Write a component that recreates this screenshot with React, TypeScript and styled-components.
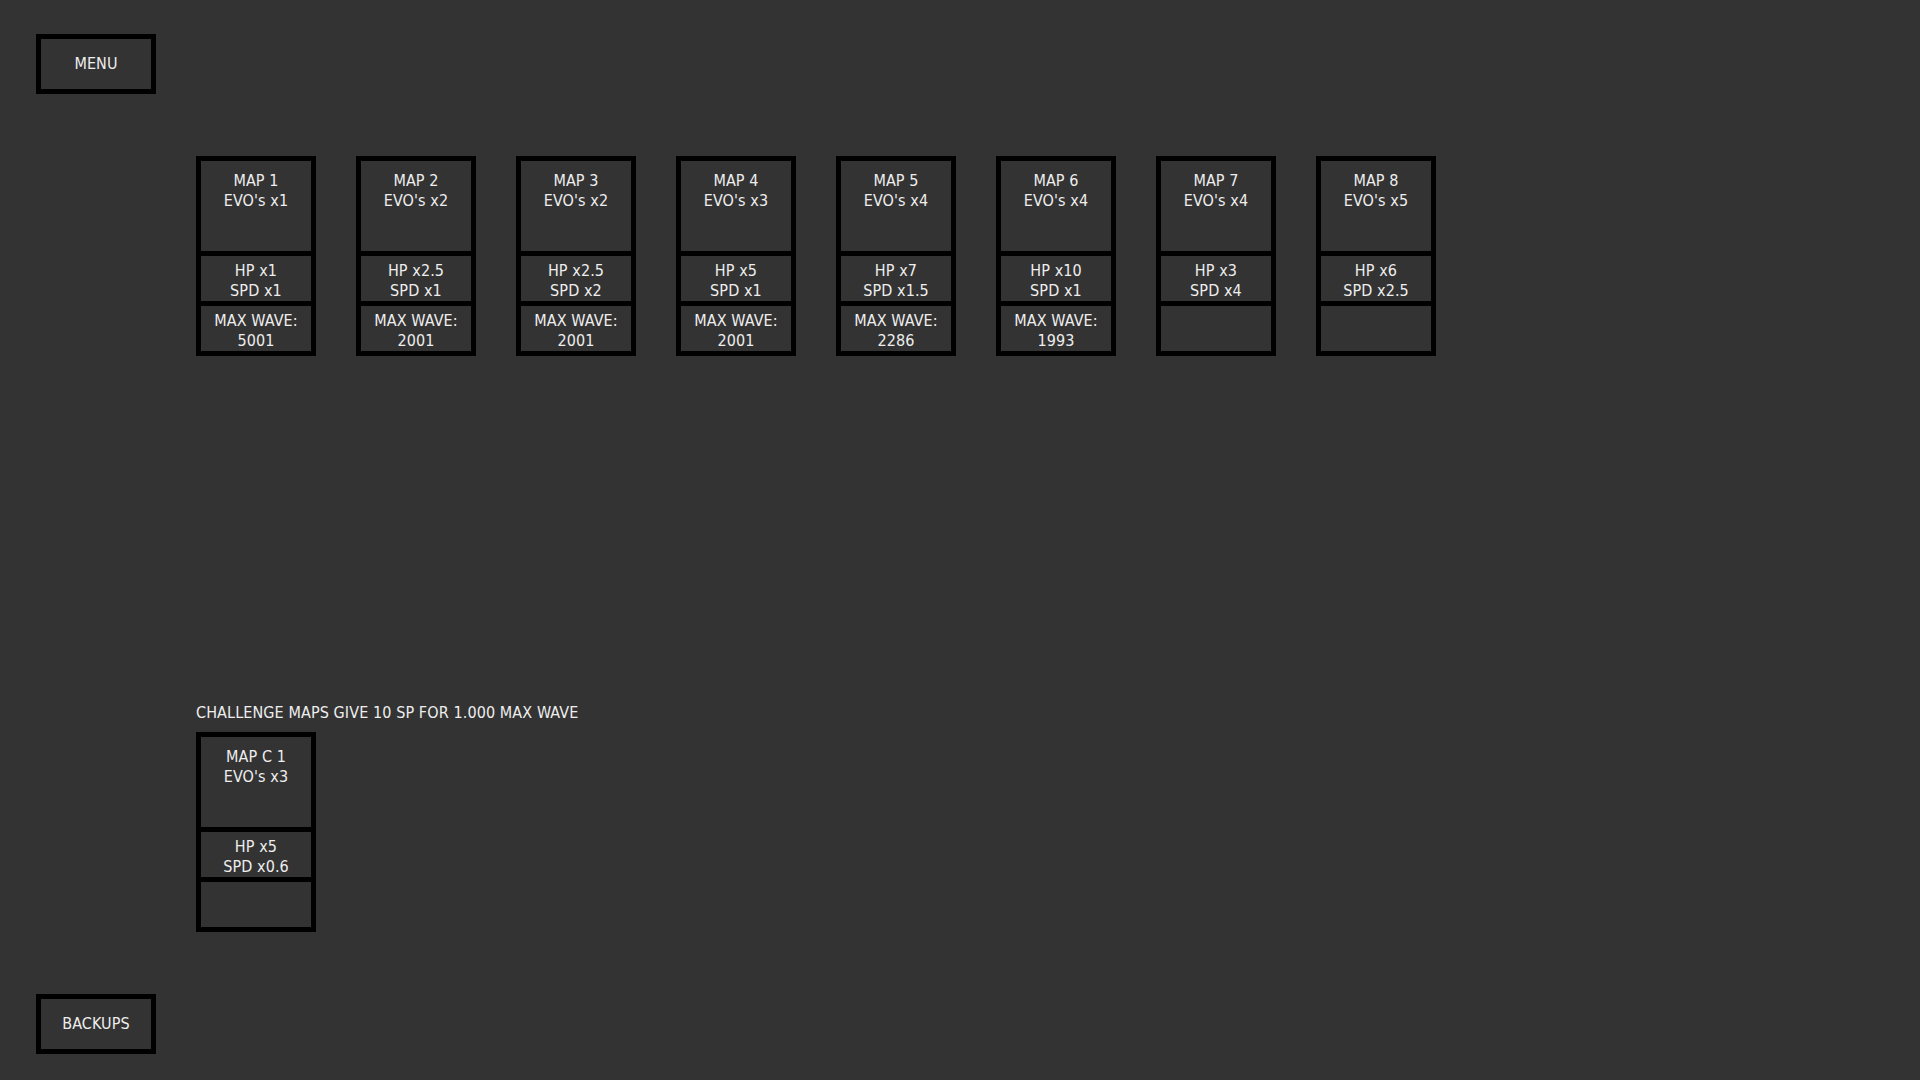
import React from "react";
import styled, { createGlobalStyle } from "styled-components";

const GlobalStyle = createGlobalStyle`
  html, body {
    margin: 0;
    padding: 0;
    background: #333333;
  }
  body {
    font-family: "DejaVu Sans Condensed", "DejaVu Sans", "Liberation Sans", sans-serif;
    font-stretch: semi-condensed;
    font-size: 16px;
    line-height: 20px;
    letter-spacing: 0.1px;
    color: #eeeeee;
  }
`;

const Screen = styled.div`
  box-sizing: border-box;
  height: 100vh;
  display: flex;
  flex-direction: column;
  align-items: flex-start;
  padding: 34px 36px 26px;
`;

const NavButton = styled.button<{ $push?: boolean }>`
  box-sizing: border-box;
  width: 120px;
  height: 60px;
  display: flex;
  align-items: center;
  justify-content: center;
  border: 5px solid #000;
  background: transparent;
  color: inherit;
  font: inherit;
  letter-spacing: inherit;
  padding: 0;
  cursor: pointer;
  margin-top: ${(p) => (p.$push ? "auto" : "0")};
`;

const Content = styled.main`
  margin-left: 160px;
  display: flex;
  flex-direction: column;
  align-items: flex-start;
`;

const MapRow = styled.div<{ $offset?: number }>`
  display: flex;
  gap: 40px;
  margin-top: ${(p) => p.$offset ?? 0}px;
`;

const Card = styled.div`
  box-sizing: border-box;
  width: 120px;
  height: 200px;
  display: flex;
  flex-direction: column;
  gap: 5px;
  border: 5px solid #000;
  background: #000;
`;

const Section = styled.div<{ $tall?: boolean }>`
  box-sizing: border-box;
  height: ${(p) => (p.$tall ? "90px" : "45px")};
  padding-top: ${(p) => (p.$tall ? "10px" : "5px")};
  background: #333333;
  text-align: center;
  white-space: nowrap;
  overflow: hidden;
`;

const Line = styled.div``;

const Note = styled.p`
  margin: 346px 0 9px;
  padding-top: 1px;
`;

type MapInfo = {
  name: string;
  evo: string;
  hp: string;
  spd: string;
  wave?: string;
};

const maps: MapInfo[] = [
  { name: "MAP 1", evo: "x1", hp: "x1", spd: "x1", wave: "5001" },
  { name: "MAP 2", evo: "x2", hp: "x2.5", spd: "x1", wave: "2001" },
  { name: "MAP 3", evo: "x2", hp: "x2.5", spd: "x2", wave: "2001" },
  { name: "MAP 4", evo: "x3", hp: "x5", spd: "x1", wave: "2001" },
  { name: "MAP 5", evo: "x4", hp: "x7", spd: "x1.5", wave: "2286" },
  { name: "MAP 6", evo: "x4", hp: "x10", spd: "x1", wave: "1993" },
  { name: "MAP 7", evo: "x4", hp: "x3", spd: "x4" },
  { name: "MAP 8", evo: "x5", hp: "x6", spd: "x2.5" },
];

const challenges: MapInfo[] = [
  { name: "MAP C 1", evo: "x3", hp: "x5", spd: "x0.6" },
];

function MapCard({ info }: { info: MapInfo }) {
  return (
    <Card>
      <Section $tall>
        <Line>{info.name}</Line>
        <Line>EVO's {info.evo}</Line>
      </Section>
      <Section>
        <Line>HP {info.hp}</Line>
        <Line>SPD {info.spd}</Line>
      </Section>
      <Section>
        {info.wave && (
          <>
            <Line>MAX WAVE:</Line>
            <Line>{info.wave}</Line>
          </>
        )}
      </Section>
    </Card>
  );
}

export default function App() {
  return (
    <>
      <GlobalStyle />
      <Screen>
        <NavButton>MENU</NavButton>
        <Content>
          <MapRow $offset={62}>
            {maps.map((m) => (
              <MapCard key={m.name} info={m} />
            ))}
          </MapRow>
          <Note>CHALLENGE MAPS GIVE 10 SP FOR 1.000 MAX WAVE</Note>
          <MapRow>
            {challenges.map((m) => (
              <MapCard key={m.name} info={m} />
            ))}
          </MapRow>
        </Content>
        <NavButton $push>BACKUPS</NavButton>
      </Screen>
    </>
  );
}
